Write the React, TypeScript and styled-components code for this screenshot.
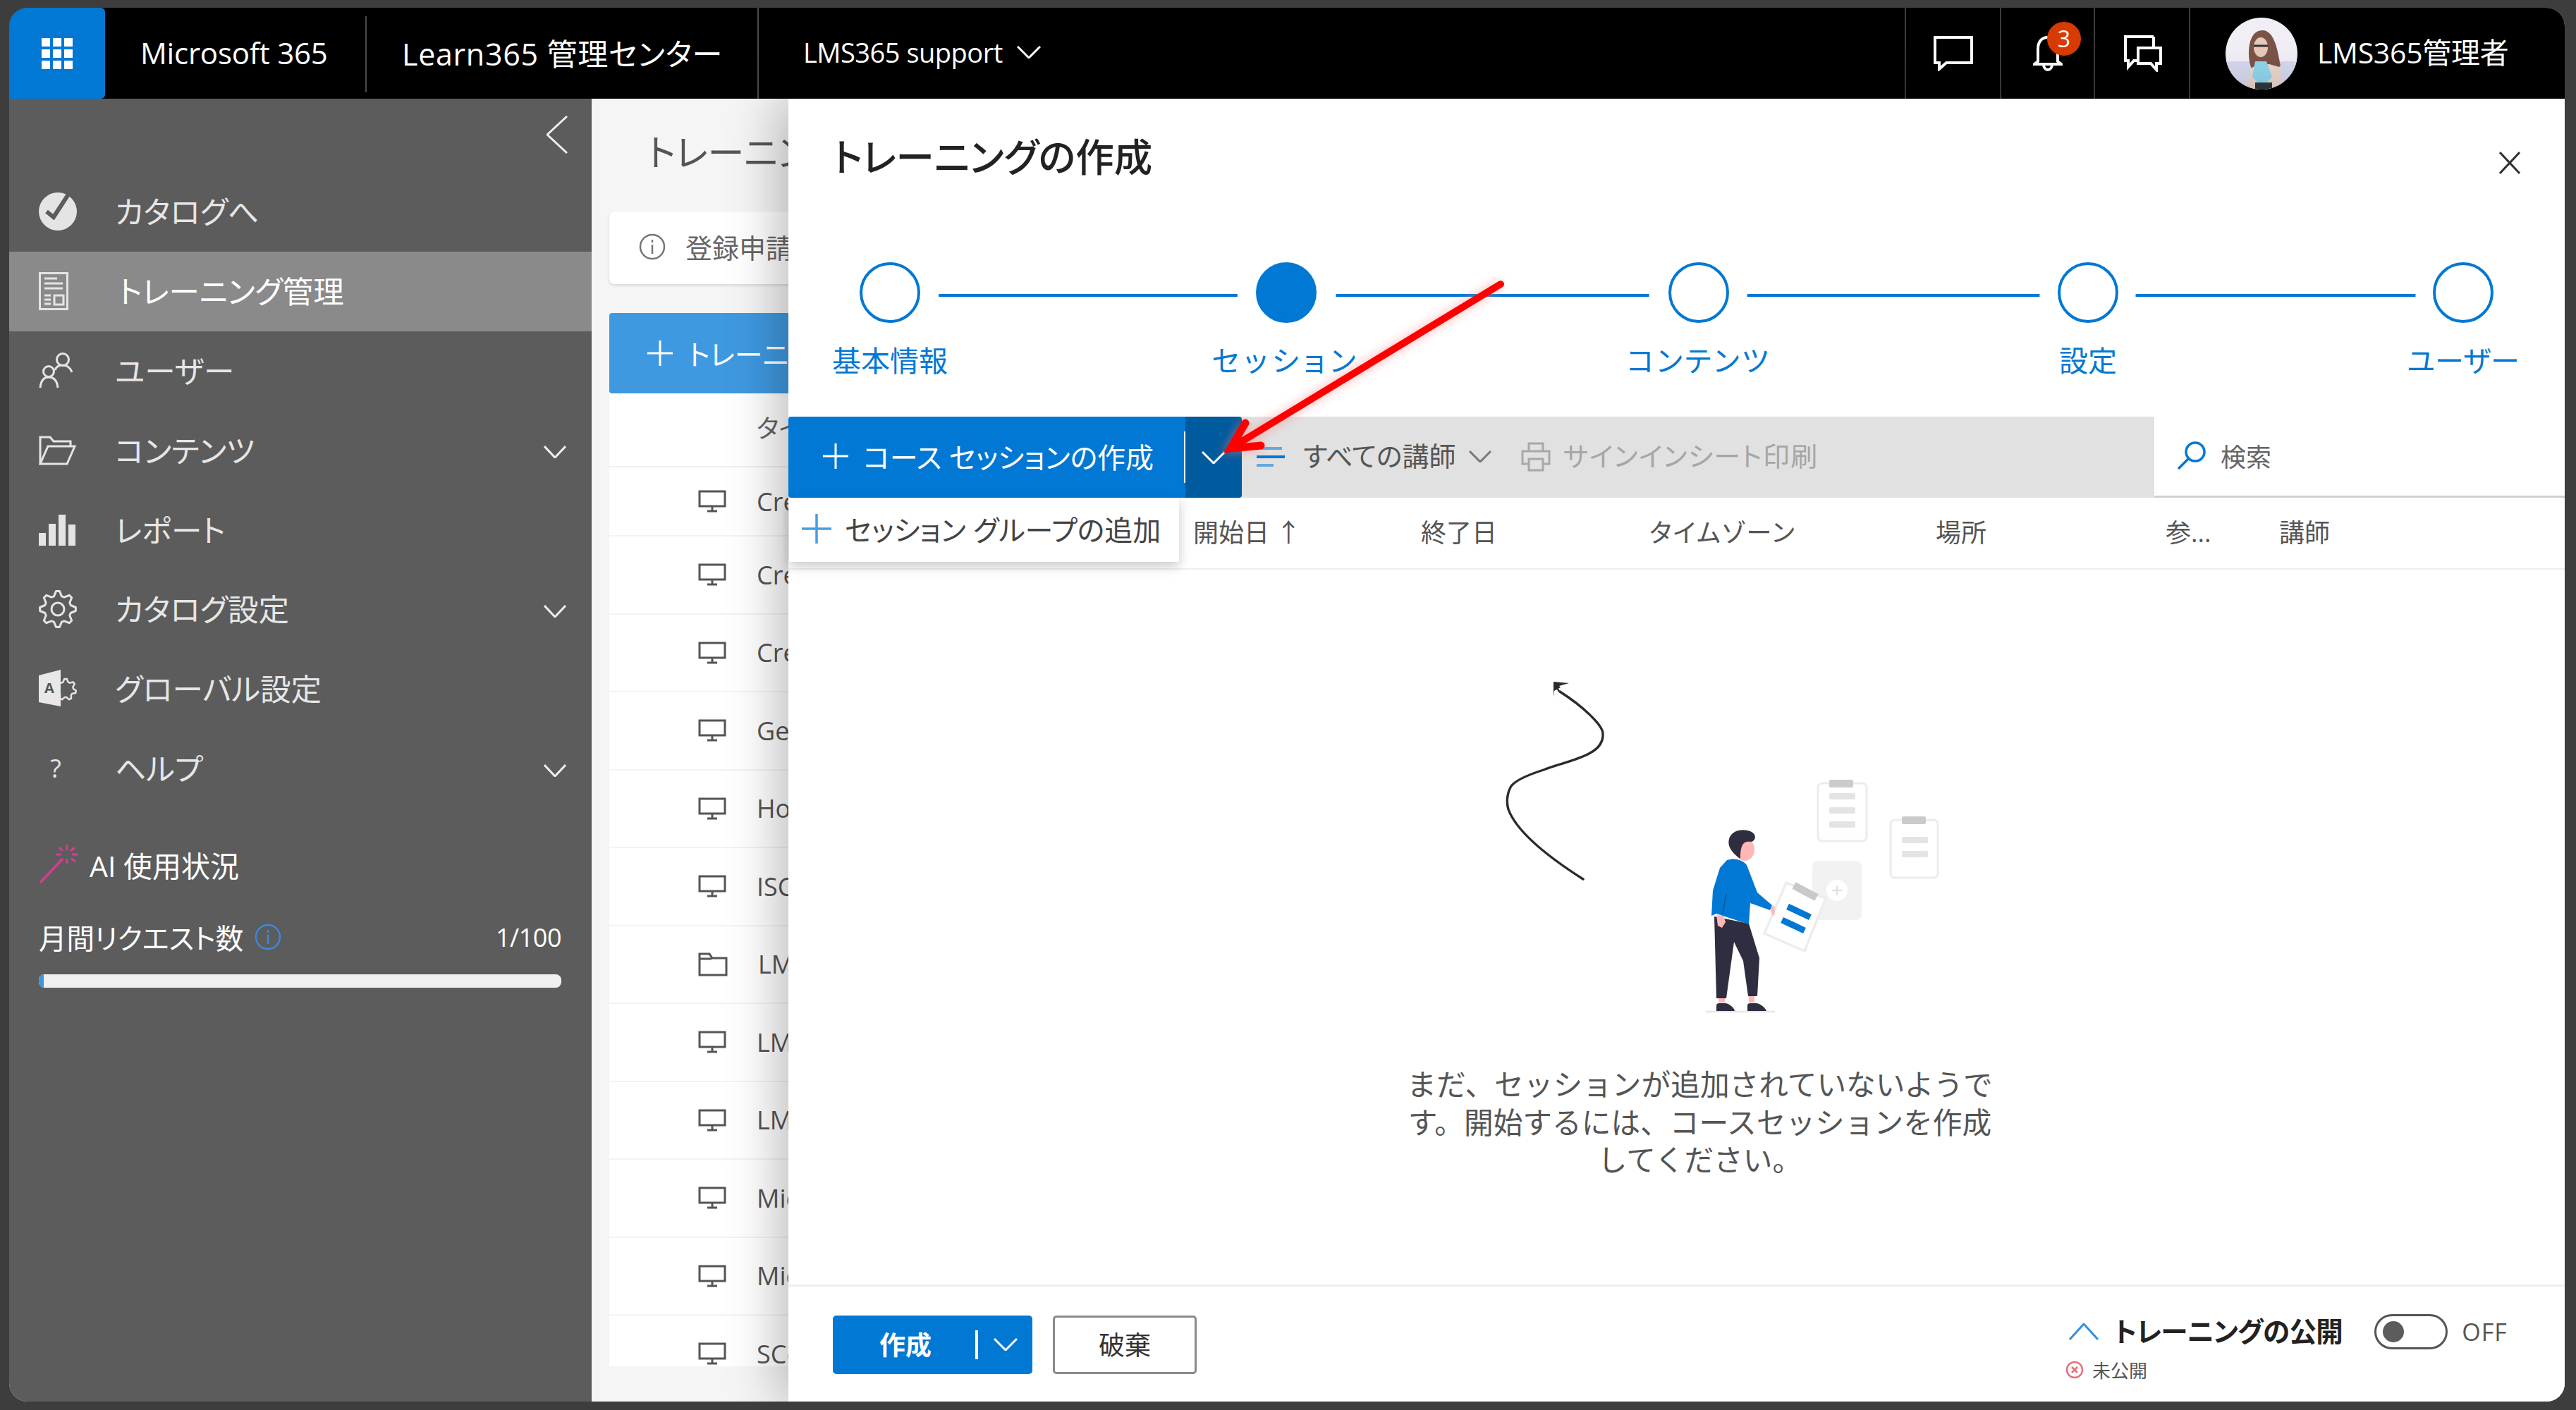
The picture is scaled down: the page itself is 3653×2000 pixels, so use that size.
import React from "react";
import styled, { createGlobalStyle } from "styled-components";

const Global = createGlobalStyle`
  html, body { margin: 0; padding: 0; width: 3653px; height: 2000px; overflow: hidden; background: #3d3d3d; }
  * { box-sizing: border-box; }
  body {
    font-family: "Open Sans", "Noto Sans CJK JP", sans-serif;
    font-feature-settings: "palt" 1;
    -webkit-font-smoothing: antialiased;
  }
`;

const Page = styled.div`
  width: 3653px; height: 2000px; padding: 11px 16px 12px 13px;
  background: #3d3d3d;
`;
const Frame = styled.div`
  position: relative; width: 100%; height: 100%;
  display: flex; flex-direction: column;
  border-radius: 26px; overflow: hidden;
  background: #f5f5f5;
`;

/* ---------- top bar ---------- */
const TopBar = styled.header`
  height: 129px; flex: none; background: #000; color: #fff;
  display: flex; align-items: stretch;
`;
const Waffle = styled.div`
  width: 136px; background: #0078d4; border-radius: 0 6px 6px 0;
  display: flex; align-items: center; justify-content: center;
`;
const WaffleGrid = styled.div`
  width: 45px; display: grid; grid-template-columns: repeat(3, 12px); gap: 4px;
  & > i { display: block; height: 12px; background: #fff; }
`;
const BrandCell = styled.div<{ $w: number; $pl: number; $fs: number; $ls: number; $rule?: boolean; $short?: boolean }>`
  width: ${p => p.$w}px; padding-left: ${p => p.$pl}px; padding-bottom: 3px;
  display: flex; align-items: center; position: relative;
  font-size: ${p => p.$fs}px; white-space: nowrap; letter-spacing: ${p => p.$ls}px;
  ${p => p.$rule ? `&::after { content: ""; position: absolute; right: 0; width: 2px; background: #4a4a4a; top: ${p.$short ? 12 : 0}px; bottom: ${p.$short ? 9 : 0}px; }` : ""}
`;
const BrandCaret = styled.span`margin-left: 20px; line-height: 0;`;
const Spacer = styled.div`flex: 1;`;
const IconCell = styled.div<{ $w: number }>`
  width: ${p => p.$w}px; border-left: 2px solid #3c3c3c;
  display: flex; align-items: center; justify-content: center; position: relative;
`;
const Badge = styled.span`
  position: absolute; left: 65px; top: 20px; width: 48px; height: 48px; border-radius: 50%;
  background: #d83b01; color: #fff; font-size: 32px; line-height: 48px; text-align: center;
`;
const UserCell = styled.div`
  width: 533px; border-left: 2px solid #3c3c3c; padding-left: 50px;
  display: flex; align-items: center; gap: 28px;
  font-size: 41px; letter-spacing: -0.3px; white-space: nowrap;
`;
const UserName = styled.span`margin-top: -8px;`;

/* ---------- body ---------- */
const Body = styled.div`
  flex: 1; min-height: 0; display: flex; position: relative;
`;
const Sidebar = styled.nav`
  width: 826px; flex: none; background: #5c5c5c; color: #e6e6e6; padding-top: 104px;
  position: relative;
`;
const Collapse = styled.div`
  position: absolute; left: 762px; top: 24px; line-height: 0;
`;
const NavRow = styled.div<{ $active?: boolean }>`
  height: 112.8px; display: flex; align-items: center; padding-left: 42px; position: relative;
  font-size: 43.5px;
  background: ${p => p.$active ? "#8a8a8a" : "transparent"};
  color: ${p => p.$active ? "#fff" : "#e6e6e6"};
`;
const NavIcon = styled.span`
  width: 108px; flex: none; display: flex; line-height: 0;
`;
const NavLabel = styled.span<{ $active?: boolean }>`
  margin: -3px 0 0 ${p => p.$active ? 5 : 0}px;
`;
const NavGlyph = styled.span`
  width: 48px; text-align: center; font-size: 36px; line-height: 1;
`;
const NavChevron = styled.span`
  position: absolute; left: 758px; top: 50px; line-height: 0;
`;
const AiRow = styled.div`
  margin-top: 40px; height: 80px; padding-left: 42px; display: flex; align-items: center; gap: 14px;
  font-size: 41px; color: #fff;
`;
const QuotaRow = styled.div`
  margin-top: 34px; padding: 0 43px 0 42px; display: flex; align-items: center;
  font-size: 39.5px; color: #fff; justify-content: space-between;
`;
const QuotaLabel = styled.div`display: flex; align-items: center; gap: 16px;`;
const QuotaValue = styled.span`font-size: 36px; letter-spacing: -0.5px;`;
const Meter = styled.div`
  margin: 24px 43px 0 42px; height: 19px; border-radius: 8px; background: #f0f0f0; overflow: hidden;
`;
const MeterFill = styled.div`height: 100%; background: #3a96dd;`;

const Main = styled.main`
  flex: 1; min-width: 0; padding: 0 0 0 25px; background: #f5f5f5; overflow: hidden;
`;
const MainTitle = styled.h1`
  height: 160px; margin: 0; padding: 0 0 14px 54px; display: flex; align-items: center;
  font-size: 52px; font-weight: 400; color: #555; white-space: nowrap;
`;
const Notice = styled.div`
  height: 103px; width: 1000px; background: #fff; border-radius: 8px; box-shadow: 0 2px 4px rgba(0,0,0,.12);
  display: flex; align-items: center; gap: 28px; padding: 0 0 4px 42px; font-size: 38px; color: #666; white-space: nowrap;
`;
const NewButton = styled.div`
  margin-top: 41px; height: 114px; width: 1000px; background: #3f99e0; border-radius: 4px 0 0 4px; color: #fff;
  display: flex; align-items: center; padding-left: 54px; gap: 22px; font-size: 40px; white-space: nowrap;
`;
const ListHead = styled.div`
  height: 105px; width: 1000px; background: #fff; padding-left: 209px; padding-bottom: 8px; display: flex; align-items: center;
  font-size: 36px; color: #666; border-bottom: 2px solid #f0f0f0;
`;
const List = styled.div`
  height: 1275px; width: 1000px; background: #fff; overflow: hidden;
`;
const ListRow = styled.div`
  height: 110.5px; display: flex; align-items: center; padding-left: 126px; gap: 43px;
  font-size: 36px; color: #555; border-bottom: 2px solid #f3f3f3; white-space: nowrap;
  &:first-child { height: 98px; }
`;

/* ---------- panel ---------- */
const Panel = styled.section`
  position: absolute; left: 1105px; right: 0; top: 0; bottom: 0; background: #fff;
  box-shadow: -12px 0 70px rgba(0,0,0,.28); display: flex; flex-direction: column; color: #333;
`;
const PanelHead = styled.div`
  height: 232px; flex: none; position: relative; padding: 47px 0 0 63px;
`;
const PanelTitle = styled.h2`
  margin: 0; font-size: 54.5px; line-height: 70px; font-weight: 500; color: #222; letter-spacing: 0;
`;
const Close = styled.span`
  position: absolute; right: 63px; top: 75px; line-height: 0;
`;
const Stepper = styled.div`
  height: 219px; flex: none; display: flex; align-items: flex-start; padding-left: 101px;
`;
const Step = styled.div`
  width: 86px; flex: none; display: flex; flex-direction: column; align-items: center; position: relative;
`;
const StepDot = styled.span<{ $on?: boolean }>`
  width: 86px; height: 86px; border-radius: 50%; border: 4px solid #0078d4;
  background: ${p => p.$on ? "#0078d4" : "#fff"};
`;
const StepLabel = styled.span<{ $ls: number }>`
  margin-top: 27px; font-size: 41px; line-height: 52px; color: #0078d4; white-space: nowrap; letter-spacing: ${p => p.$ls}px;
`;
const Connector = styled.span<{ $w: number }>`
  width: ${p => p.$w}px; flex: none; height: 4px; background: #0078d4; margin-top: 45px;
  transform: scaleX(.89);
`;
const Toolbar = styled.div`
  height: 115px; flex: none; display: flex; position: relative; background: #e1e1e1;
`;
const CreateBtn = styled.div`
  width: 563px; flex: none; background: #0078d4; color: #fff; border-radius: 4px 0 0 4px; position: relative;
  display: flex; align-items: center; padding: 0 0 4px 49px; gap: 21px; font-size: 40px; white-space: nowrap;
  &::after { content: ""; position: absolute; right: 0; top: 21px; bottom: 21px; width: 2px; background: #fff; }
`;
const CreateCaret = styled.div`
  width: 80px; flex: none; background: #005a9e; border-radius: 0 4px 4px 0;
  display: flex; align-items: center; justify-content: center;
`;
const ToolItems = styled.div`
  flex: 1; display: flex; align-items: center; padding: 0 0 2px 21px; font-size: 38px; color: #555; white-space: nowrap;
`;
const ToolLabel = styled.span<{ $off?: boolean; $ml: number }>`
  margin-left: ${p => p.$ml}px; color: ${p => p.$off ? "#a6a6a6" : "#555"}; line-height: 0;
  letter-spacing: ${p => p.$off ? 1.4 : 0}px;
  & > span { line-height: 1; position: relative; top: -2px; }
`;
const Search = styled.div`
  width: 582px; flex: none; background: #fff; border-bottom: 3px solid #d0d0d0; display: flex; align-items: center;
  padding: 0 0 2px 32px; gap: 20px; font-size: 36px; color: #666;
`;
const Menu = styled.div`
  position: absolute; left: 1px; top: 100%; width: 553px; height: 91px; background: #fff; z-index: 2;
  box-shadow: 0 6px 16px rgba(0,0,0,.22); display: flex; align-items: center; padding: 0 0 3px 18px; gap: 19px;
  font-size: 40px; color: #444; white-space: nowrap;
`;
const TableHead = styled.div`
  height: 102px; flex: none; position: relative; display: grid; align-items: center; padding-bottom: 5px;
  grid-template-columns: 574px 323px 324px 406px 326px 161px auto; font-size: 36px; color: #555;
  border-bottom: 2px solid #efefef; white-space: nowrap;
`;
const Zone = styled.span`letter-spacing: 2.2px;`;
const Empty = styled.div`
  flex: 1; min-height: 0; display: flex; flex-direction: column; align-items: center; padding: 142px 0 0 66px;
`;
const EmptyArt = styled.svg`display: block; width: 722px; height: 490px; flex: none;`;
const EmptyText = styled.p`
  margin: 71px 0 0; font-size: 41.7px; line-height: 53.5px; color: #555; text-align: center; white-space: nowrap;
  font-feature-settings: normal;
`;
const Footer = styled.footer`
  height: 166px; flex: none; border-top: 3px solid #efefef; display: flex; padding: 41px 0 0 63px; position: relative;
`;
const PrimaryBtn = styled.div`
  width: 283px; height: 83px; background: #0078d4; color: #fff; border-radius: 5px; font-size: 37px; font-weight: 700;
  display: flex; align-items: center; position: relative; padding: 0 0 4px 66px;
  &::after { content: ""; position: absolute; left: 202px; top: 21px; bottom: 21px; width: 4px; background: #fff; }
`;
const PrimaryCaret = styled.span`position: absolute; left: 228px; top: 32px; line-height: 0;`;
const GhostBtn = styled.div`
  width: 204px; height: 83px; margin-left: 29px; border: 3px solid #8a8a8a; border-radius: 5px; font-size: 37px; color: #333;
  display: flex; align-items: center; justify-content: center; padding-bottom: 4px;
`;
const PublishBox = styled.div`
  margin-left: auto; width: 708px; display: flex; flex-direction: column; align-items: flex-start; margin-top: -4px;
`;
const PublishRow = styled.div`
  display: flex; align-items: center; height: 54px; padding-left: 5px; font-size: 38.500px; font-weight: 700; color: #222;
  letter-spacing: -0.6px; white-space: nowrap;
`;
const PublishLabel = styled.span`margin: -6px 0 0 22px;`;
const Toggle = styled.span`
  width: 104px; height: 50px; margin-left: 45px; border: 3px solid #555; border-radius: 25px; flex: none;
  display: flex; align-items: center; padding-left: 9px;
  &::before { content: ""; width: 30px; height: 30px; border-radius: 50%; background: #5c5c5c; }
`;
const OffText = styled.span`
  margin-left: 20px; font-size: 34px; font-weight: 400; color: #555; letter-spacing: 1px;
`;
const StatusRow = styled.div`
  display: flex; align-items: center; gap: 12px; margin-top: 8px; font-size: 26px; color: #555;
`;
const RedArrow = styled.svg`
  position: absolute; left: 0; top: 0; width: 3624px; height: 1977px; pointer-events: none; z-index: 5;
`;

/* ---------- drawings ---------- */
const Chevron = ({ dir = "down", w = 32, h = 18, c = "#eee", sw = 3 }: { dir?: "down" | "up" | "left"; w?: number; h?: number; c?: string; sw?: number }) => {
  const pts = dir === "down" ? `1,1 ${w / 2},${h - 1} ${w - 1},1`
    : dir === "up" ? `1,${h - 1} ${w / 2},1 ${w - 1},${h - 1}`
    : `${w - 1},1 1,${h / 2} ${w - 1},${h - 1}`;
  return <svg width={w} height={h} viewBox={`0 0 ${w} ${h}`}><polyline points={pts} fill="none" stroke={c} strokeWidth={sw} /></svg>;
};
const Plus = ({ s = 36, c = "#fff", sw = 3 }: { s?: number; c?: string; sw?: number }) => (
  <svg width={s} height={s} viewBox={`0 0 ${s} ${s}`}>
    <path d={`M${s / 2} 0V${s}M0 ${s / 2}H${s}`} stroke={c} strokeWidth={sw} fill="none" />
  </svg>
);
const Monitor = () => (
  <svg width="40" height="32" viewBox="0 0 40 32" fill="none" stroke="#555" strokeWidth="3">
    <rect x="2" y="2" width="36" height="21" />
    <path d="M20 23v6M13 30h14" />
  </svg>
);
const FolderLine = () => (
  <svg width="42" height="34" viewBox="0 0 42 34" fill="none" stroke="#555" strokeWidth="3">
    <path d="M2 2h14l4 6h20v24H2z" /><path d="M2 9h17" />
  </svg>
);
const Info = ({ s = 38, c = "#777" }: { s?: number; c?: string }) => (
  <svg width={s} height={s} viewBox="0 0 38 38" fill="none" stroke={c} strokeWidth="2.5">
    <circle cx="19" cy="19" r="17" /><path d="M19 16v13M19 9v4" />
  </svg>
);
const CheckDisc = () => (
  <svg width="54" height="54" viewBox="0 0 54 54">
    <circle cx="27" cy="27" r="27" fill="#e4e4e4" />
    <path d="M11 27 21 35 43 1" fill="none" stroke="#5c5c5c" strokeWidth="6" />
  </svg>
);
const DocIcon = () => (
  <svg width="42" height="54" viewBox="0 0 42 54" fill="none" stroke="#e4e4e4" strokeWidth="3">
    <rect x="1.500" y="1.500" width="39" height="51" />
    <path d="M8 9h18M8 16h26M8 23h26M8 33h9M8 39h9M8 45h9" />
    <rect x="22" y="33" width="13" height="13" />
  </svg>
);
const UsersIcon = () => (
  <svg width="50" height="52" viewBox="0 0 50 52" fill="none" stroke="#e4e4e4" strokeWidth="3">
    <circle cx="34" cy="10" r="8.500" /><path d="M23 25c2-6 6-7 11-7s10 2 13 10" />
    <circle cx="14" cy="27" r="7.500" /><path d="M2 50c1-10 5-15 12-15s12 5 13 15" />
  </svg>
);
const FolderOpen = () => (
  <svg width="54" height="42" viewBox="0 0 54 42" fill="none" stroke="#e4e4e4" strokeWidth="3">
    <path d="M2 40V2h14l5 6h24v7" /><path d="M2 40h38l11-25H13L2 40z" />
  </svg>
);
const BarsIcon = () => (
  <svg width="52" height="44" viewBox="0 0 52 44" fill="#e4e4e4">
    <rect x="0" y="26" width="10" height="18" /><rect x="14" y="13" width="10" height="31" />
    <rect x="28" y="0" width="10" height="44" /><rect x="42" y="14" width="10" height="30" />
  </svg>
);
const gearPath = (cx: number, cy: number, r1: number, r2: number, n: number) => {
  const pts: string[] = [];
  for (let i = 0; i < n * 4; i++) {
    const a = (i / (n * 4)) * Math.PI * 2 - Math.PI / 2 - Math.PI / (n * 4);
    const r = i % 4 === 0 || i % 4 === 1 ? r1 : r2;
    pts.push(`${(cx + r * Math.cos(a)).toFixed(1)},${(cy + r * Math.sin(a)).toFixed(1)}`);
  }
  return `M${pts.join("L")}Z`;
};
const GearIcon = () => (
  <svg width="54" height="54" viewBox="0 0 54 54" fill="none" stroke="#e4e4e4" strokeWidth="3" strokeLinejoin="round">
    <path d={gearPath(27, 27, 25.5, 19, 8)} /><circle cx="27" cy="27" r="9" />
  </svg>
);
const GlobalIcon = () => (
  <svg width="54" height="54" viewBox="0 0 54 54">
    <path d={gearPath(38, 28, 15, 11, 7)} fill="none" stroke="#e4e4e4" strokeWidth="2.5" />
    <path d="M0 8 31 0V52L0 46Z" fill="#e8e8e8" />
    <text x="8" y="33" fontSize="20" fontWeight="700" fontFamily="Open Sans, sans-serif" fill="#555">A</text>
  </svg>
);
const WandIcon = () => (
  <svg width="58" height="56" viewBox="0 0 58 56" fill="none" stroke="#d0408f" strokeWidth="3">
    <path d="M2 54 34 20" strokeWidth="3.500" />
    <path d="M40 0v8M40 20v7M24 14h8M47 14h8M29 4l5 5M51 4l-6 5M29 24l5-4M52 24l-6-4" />
  </svg>
);
const ChatIcon = () => (
  <svg width="56" height="50" viewBox="0 0 56 50" fill="none" stroke="#fff" strokeWidth="4">
    <path d="M2 2h52v36H18l-10 9V38H2z" />
  </svg>
);
const BellIcon = () => (
  <svg width="42" height="50" viewBox="0 0 42 50" fill="none" stroke="#fff" strokeWidth="4">
    <path d="M21 2C11 2 7 10 7 18v18l-5 4h38l-5-4V18C35 10 31 2 21 2z" /><path d="M15 41c0 4 3 7 6 7s6-3 6-7" />
  </svg>
);
const ChatsIcon = () => (
  <svg width="56" height="52" viewBox="0 0 56 52" fill="none" stroke="#fff" strokeWidth="4">
    <path d="M44 2H4v34h4v9l8-9h4" /><path d="M44 2v15" />
    <path d="M22 18h32v22h-6v9l-8-9H22z" />
  </svg>
);
const Avatar = () => (
  <svg width="102" height="102" viewBox="0 0 102 102">
    <defs><clipPath id="av"><circle cx="51" cy="51" r="51" /></clipPath></defs>
    <g clipPath="url(#av)">
      <rect width="102" height="102" fill="#f1eef6" />
      <rect y="62" width="102" height="40" fill="#d6d8ef" />
      <path d="M36 70c-6-18-4-52 16-52 18 0 22 30 26 50-6 8-36 12-42 2z" fill="#7a5446" />
      <ellipse cx="50" cy="42" rx="10" ry="14" fill="#e8c8ba" />
      <path d="M40 40h20" stroke="#333" strokeWidth="3" />
      <path d="M30 102l6-30 10-6h16l14 4 8 32z" fill="#ead6cc" />
      <path d="M42 62h16l8 22-14 14-14-14z" fill="#8fd6ee" />
      <path d="M42 92h24v10H42z" fill="#2f3a3e" />
    </g>
  </svg>
);
const FilterIcon = () => (
  <svg width="40" height="28" viewBox="0 0 40 28" fill="none" strokeWidth="4">
    <path d="M6 2h30" stroke="#69a7dc" /><path d="M0 14h40" stroke="#0078d4" /><path d="M0 26h24" stroke="#69a7dc" />
  </svg>
);
const PrinterIcon = () => (
  <svg width="42" height="42" viewBox="0 0 42 42" fill="none" stroke="#a8a8a8" strokeWidth="3">
    <path d="M11 13V2h20v11M11 31H2V13h38v18h-9" /><rect x="11" y="24" width="20" height="16" />
  </svg>
);
const SearchIcon = () => (
  <svg width="42" height="42" viewBox="0 0 42 42" fill="none" stroke="#0078d4" strokeWidth="3.500">
    <circle cx="26" cy="16" r="13" /><path d="M16 26 2 40" />
  </svg>
);
const ErrorIcon = () => (
  <svg width="26" height="26" viewBox="0 0 26 26" fill="none" stroke="#e8707a" strokeWidth="2.500">
    <circle cx="13" cy="13" r="11" /><path d="M9 9l8 8M17 9l-8 8" />
  </svg>
);
const CloseIcon = () => (
  <svg width="30" height="32" viewBox="0 0 30 32" fill="none" stroke="#333" strokeWidth="3"><path d="M1 1l28 30M29 1 1 31" /></svg>
);

const Clip = ({ x, y, w, h, cx, cw, bars }: { x: number; y: number; w: number; h: number; cx: number; cw: number; bars: number[] }) => (
  <g>
    <rect x={x} y={y} width={w} height={h} rx="6" fill="#fff" stroke="#ececec" strokeWidth="3" />
    <rect x={cx} y={y - 5} width={cw} height={11} rx="2" fill="#cbcbcb" />
    {bars.map(b => <rect key={b} x={cx} y={b} width={cw + 3} height={9} rx="2" fill="#e4e4e4" />)}
  </g>
);

const Art = () => (
  <EmptyArt viewBox="2050 950 722 490">
    <path d="M2212 981C2245 1002 2272 1028 2273 1040C2274 1054 2266 1062 2255 1068C2236 1079 2208 1084 2189 1092C2170 1098 2150 1106 2143 1115C2137 1125 2136 1138 2139 1148C2150 1178 2190 1212 2245 1247" fill="none" stroke="#2b2b2b" strokeWidth="3.400" strokeLinecap="round" />
    <path d="M2203 967l22 2-14 4 2 2-9 5-1 9z" fill="#2b2b2b" />
    <path d="M2211 981 2204 968" stroke="#2b2b2b" strokeWidth="2.500" />
    <Clip x={2578} y={1111} w={69} h={82} cx={2594} cw={34} bars={[1125, 1145, 1165]} />
    <Clip x={2681} y={1163} w={67} h={82} cx={2697} cw={34} bars={[1187, 1207]} />
    <rect x="2570" y="1221" width="70" height="84" rx="7" fill="#f2f2f2" />
    <circle cx="2605" cy="1263" r="15" fill="#fff" />
    <path d="M2605 1256v14M2598 1263h14" stroke="#e2e2e2" strokeWidth="2.500" />
    <path d="M2533 1252 2589 1274 2559 1349 2502 1324Z" fill="#fff" stroke="#ededed" strokeWidth="3.500" strokeLinejoin="round" />
    <path d="M2544 1256 2576 1273" stroke="#c9c9c9" strokeWidth="11" />
    <path d="M2535 1286 2567 1301M2527 1305 2559 1320" stroke="#0078d4" strokeWidth="9" />
    <path d="M2419 1435H2517" stroke="#e6e6e6" strokeWidth="2.500" />
    <path d="M2437 1408h9v14h-9zM2480 1408h8v14h-8z" fill="#ffb6b6" />
    <path d="M2434 1434v-8c0-2 2-3 4-3h8c6 0 13 6 14 11zM2478 1434v-8c0-2 2-3 4-3h8c6 0 13 6 15 11z" fill="#2f2e41" />
    <path d="M2431 1300 2480 1310 2495 1359 2492 1413H2479L2472 1363 2459 1336 2448 1416H2434Z" fill="#2f2e41" />
    <path d="M2510 1288l6-4 1 10-3 6z" fill="#ffb6b6" />
    <path d="M2434 1298l10 1 3 9-5 8-6-3z" fill="#ffb6b6" />
    <path d="M2449 1220C2460 1216 2472 1220 2477 1227L2492 1266 2513 1284 2510 1291 2482 1281 2480 1311 2434 1296 2427 1299 2429 1263 2439 1231Z" fill="#0078d4" />
    <path d="M2448 1268 2443 1296" stroke="#005a9e" strokeWidth="1.500" fill="none" />
    <ellipse cx="2474" cy="1205" rx="14" ry="16" fill="#ffb6b6" />
    <path d="M2468 1218C2456 1210 2449 1200 2452 1190 2456 1176 2474 1175 2484 1180 2491 1184 2490 1192 2484 1194 2472 1192 2468 1198 2468 1218Z" fill="#2f2e41" />
  </EmptyArt>
);

const rows: [string, boolean?][] = [["Cre"], ["Cre"], ["Cre"], ["Ge"], ["Ho"], ["ISC"], ["LM", true], ["LM"], ["LM"], ["Mi"], ["Mi"], ["SC"]];
const steps: [string, number, number][] = [["基本情報", 476, 0], ["セッション", 499, 7], ["コンテンツ", 466, 3.5], ["設定", 446, 0], ["ユーザー", 0, 0]];
const nav = [
  { t: "カタログへ", i: <CheckDisc /> },
  { t: "トレーニング管理", i: <DocIcon />, active: true },
  { t: "ユーザー", i: <UsersIcon /> },
  { t: "コンテンツ", i: <FolderOpen />, more: true },
  { t: "レポート", i: <BarsIcon /> },
  { t: "カタログ設定", i: <GearIcon />, more: true },
  { t: "グローバル設定", i: <GlobalIcon /> },
  { t: "ヘルプ", i: <NavGlyph>?</NavGlyph>, more: true },
];

export default function App() {
  return (
    <Page>
      <Global />
      <Frame>
        <TopBar>
          <Waffle><WaffleGrid>{Array.from({ length: 9 }, (_, i) => <i key={i} />)}</WaffleGrid></Waffle>
          <BrandCell $w={371} $pl={50} $fs={42} $ls={-0.2} $rule $short>Microsoft 365</BrandCell>
          <BrandCell $w={556} $pl={50} $fs={43} $ls={0.7} $rule>Learn365 管理センター</BrandCell>
          <BrandCell $w={440} $pl={63} $fs={38} $ls={-0.5}>LMS365 support<BrandCaret><Chevron c="#fff" w={34} h={18} /></BrandCaret></BrandCell>
          <Spacer />
          <IconCell $w={135}><ChatIcon /></IconCell>
          <IconCell $w={133}><BellIcon /><Badge>3</Badge></IconCell>
          <IconCell $w={135}><ChatsIcon /></IconCell>
          <UserCell><Avatar /><UserName>LMS365管理者</UserName></UserCell>
        </TopBar>
        <Body>
          <Sidebar>
            <Collapse><Chevron dir="left" w={30} h={54} c="#eee" /></Collapse>
            {nav.map(n => (
              <NavRow key={n.t} $active={n.active}>
                <NavIcon>{n.i}</NavIcon><NavLabel $active={n.active}>{n.t}</NavLabel>
                {n.more && <NavChevron><Chevron /></NavChevron>}
              </NavRow>
            ))}
            <AiRow><WandIcon />AI 使用状況</AiRow>
            <QuotaRow>
              <QuotaLabel>月間リクエスト数<Info s={38} c="#3a88d8" /></QuotaLabel>
              <QuotaValue>1/100</QuotaValue>
            </QuotaRow>
            <Meter><MeterFill style={{ width: "1%" }} /></Meter>
          </Sidebar>
          <Main>
            <MainTitle>トレーニング管理</MainTitle>
            <Notice><Info />登録申請が保留中です</Notice>
            <NewButton><Plus s={36} />トレーニングの作成</NewButton>
            <ListHead>タイトル</ListHead>
            <List>
              {rows.map(([t, folder], i) => (
                <ListRow key={i}>{folder ? <FolderLine /> : <Monitor />}<span>{t}eate</span></ListRow>
              ))}
            </List>
          </Main>
          <Panel>
            <PanelHead>
              <PanelTitle>トレーニングの作成</PanelTitle>
              <Close><CloseIcon /></Close>
            </PanelHead>
            <Stepper>
              {steps.map(([t, w, ls], i) => (
                <React.Fragment key={t}>
                  <Step><StepDot $on={i === 1} /><StepLabel $ls={ls}>{t}</StepLabel></Step>
                  {w > 0 && <Connector $w={w} />}
                </React.Fragment>
              ))}
            </Stepper>
            <Toolbar>
              <CreateBtn><Plus s={36} />コース セッションの作成</CreateBtn>
              <CreateCaret><Chevron c="#fff" w={34} h={18} /></CreateCaret>
              <ToolItems>
                <FilterIcon />
                <ToolLabel $ml={26}><span>すべての講師</span></ToolLabel>
                <ToolLabel $ml={18}><Chevron c="#777" w={32} h={17} /></ToolLabel>
                <ToolLabel $ml={42}><PrinterIcon /></ToolLabel>
                <ToolLabel $off $ml={18}><span>サインインシート印刷</span></ToolLabel>
              </ToolItems>
              <Search><SearchIcon />検索</Search>
              <Menu><Plus s={42} c="#4a9edb" sw={3.500} />セッション グループの追加</Menu>
            </Toolbar>
            <TableHead>
              <span />
              <span>開始日 ↑</span><span>終了日</span><Zone>タイムゾーン</Zone><span>場所</span><span>参...</span><span>講師</span>
            </TableHead>
            <Empty>
              <Art />
              <EmptyText>まだ、セッションが追加されていないようで<br />す。開始するには、コースセッションを作成<br />してください。</EmptyText>
            </Empty>
            <Footer>
              <PrimaryBtn>作成<PrimaryCaret><Chevron c="#fff" w={34} h={18} /></PrimaryCaret></PrimaryBtn>
              <GhostBtn>破棄</GhostBtn>
              <PublishBox>
                <PublishRow>
                  <Chevron dir="up" w={42} h={24} c="#3a8fd6" sw={3} /><PublishLabel>トレーニングの公開</PublishLabel>
                  <Toggle /><OffText>OFF</OffText>
                </PublishRow>
                <StatusRow><ErrorIcon />未公開</StatusRow>
              </PublishBox>
            </Footer>
          </Panel>
        </Body>
        <RedArrow viewBox="13 11 3624 1977">
          <defs><filter id="glow" x="-20%" y="-20%" width="140%" height="140%"><feGaussianBlur stdDeviation="7" /></filter></defs>
          <g fill="none" stroke="#ff8080" strokeWidth="14" opacity=".45" filter="url(#glow)">
            <path d="M2128 403 1745 636" /><path d="M1766 600 1745 636 1790 632" />
          </g>
          <g fill="none" stroke="#ff0000" strokeLinecap="round">
            <path d="M2128 403 1748 634" strokeWidth="10" />
            <path d="M1766 600 1745 636 1788 632" strokeWidth="11" strokeLinejoin="miter" />
          </g>
        </RedArrow>
      </Frame>
    </Page>
  );
}
